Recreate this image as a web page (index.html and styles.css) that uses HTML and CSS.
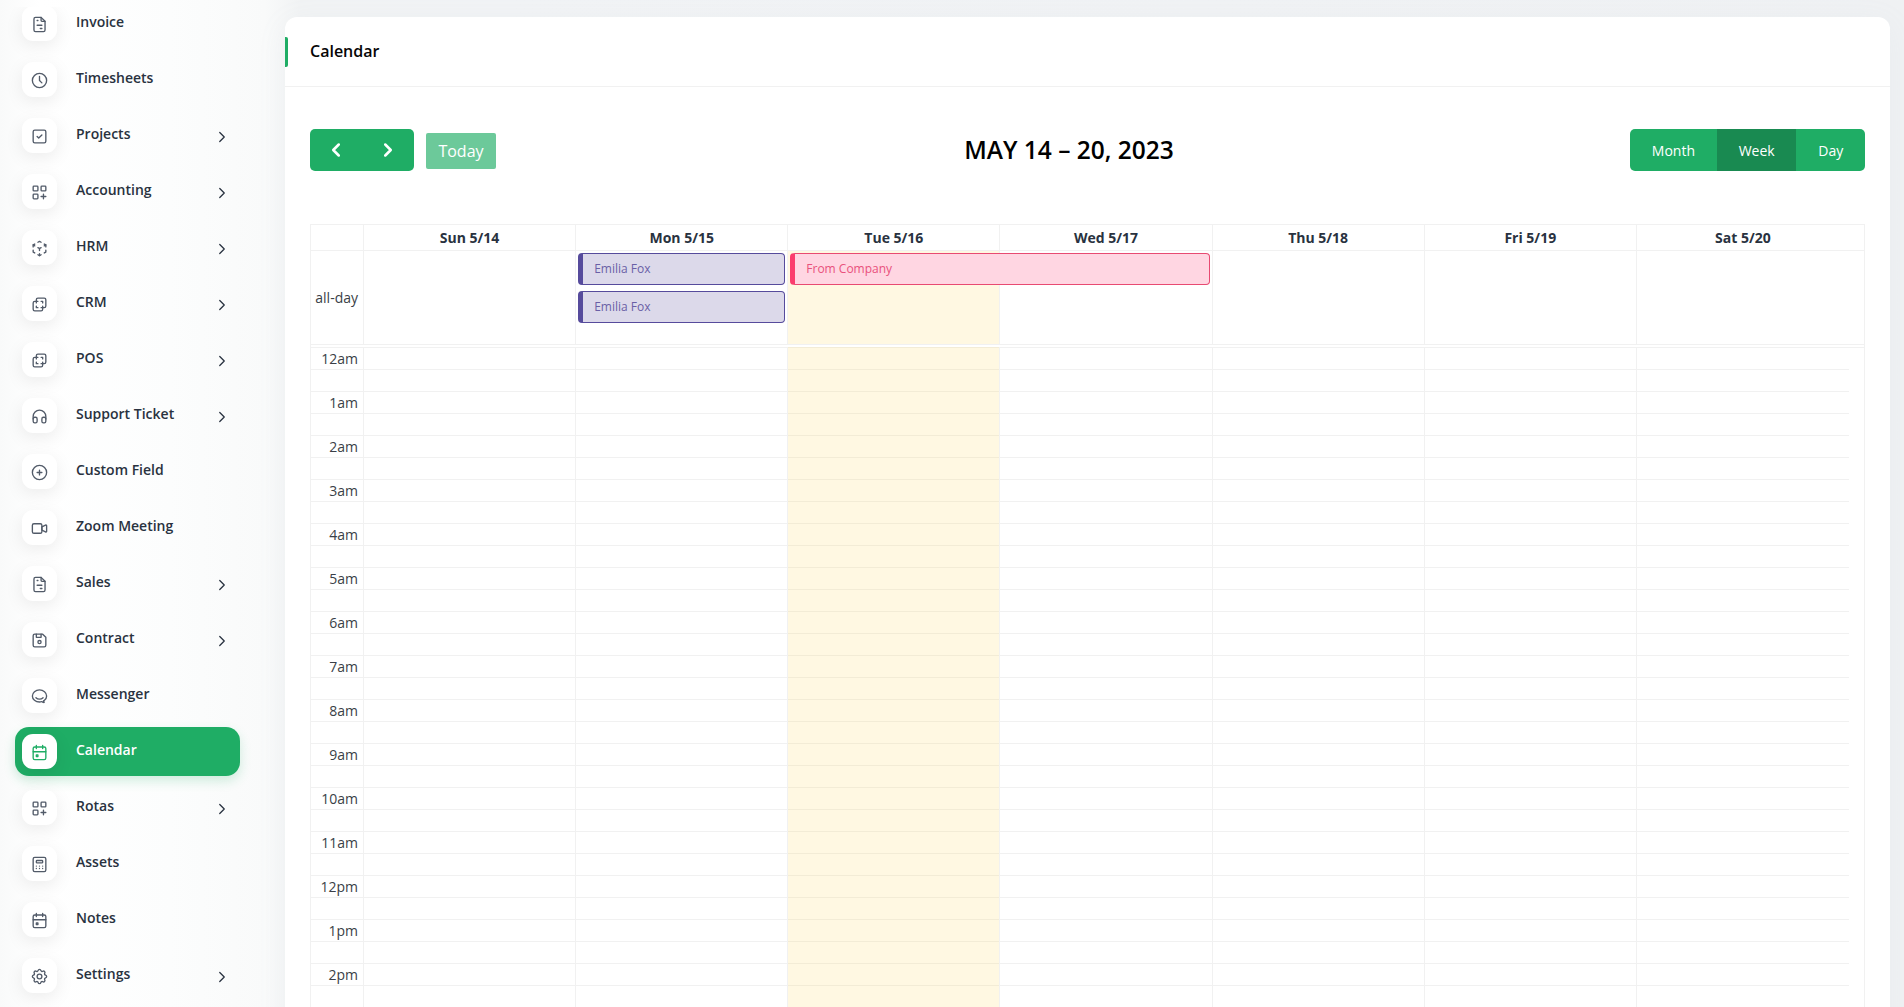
FILE: index.html
```html
<!DOCTYPE html>
<html lang="en">
<head>
<meta charset="utf-8">
<title>Calendar</title>
<link rel="stylesheet" href="styles.css">
</head>
<body>
<svg class="sprite" xmlns="http://www.w3.org/2000/svg">
  <symbol id="i-file" viewBox="0 0 24 24"><path d="M14 3v4a1 1 0 0 0 1 1h4"/><path d="M17 21H7a2 2 0 0 1-2-2V5a2 2 0 0 1 2-2h7l5 5v11a2 2 0 0 1-2 2z"/><path d="M9 7h1"/><path d="M9 13h6"/><path d="M13 17h2"/></symbol>
  <symbol id="i-clock" viewBox="0 0 24 24"><circle cx="12" cy="12" r="9"/><path d="M12 7v5l3 3"/></symbol>
  <symbol id="i-check" viewBox="0 0 24 24"><rect x="4" y="4" width="16" height="16" rx="2"/><path d="M9 12l2 2 4-4"/></symbol>
  <symbol id="i-grid" viewBox="0 0 24 24"><rect x="4" y="4" width="6" height="6" rx="1"/><rect x="14" y="4" width="6" height="6" rx="1"/><rect x="4" y="14" width="6" height="6" rx="1"/><path d="M14 17h6M17 14v6"/></symbol>
  <symbol id="i-cube" viewBox="0 0 24 24"><path d="M6 17.6l-2-1.1V14"/><path d="M4 10V7.5l2-1.1"/><path d="M10 4.1L12 3l2 1.1"/><path d="M18 6.4l2 1.1V10"/><path d="M20 14v2.5l-2 1.12"/><path d="M14 19.9L12 21l-2-1.1"/><path d="M12 12l2-1.12"/><path d="M18 8.6l2-1.1"/><path d="M12 12v2.5"/><path d="M12 18.5V21"/><path d="M12 12l-2-1.12"/><path d="M6 8.6L4 7.5"/></symbol>
  <symbol id="i-layers" viewBox="0 0 24 24"><path d="M16 16v2a2 2 0 0 1-2 2H6a2 2 0 0 1-2-2v-8a2 2 0 0 1 2-2h2"/><path d="M8 8V6a2 2 0 0 1 2-2h8a2 2 0 0 1 2 2v8a2 2 0 0 1-2 2h-2"/><path d="M10 8H8v2"/><path d="M8 14v2h2"/><path d="M14 8h2v2"/><path d="M16 14v2h-2"/></symbol>
  <symbol id="i-headphones" viewBox="0 0 24 24"><rect x="4" y="13" width="5" height="7" rx="2"/><rect x="15" y="13" width="5" height="7" rx="2"/><path d="M4 15v-3a8 8 0 0 1 16 0v3"/></symbol>
  <symbol id="i-plus" viewBox="0 0 24 24"><circle cx="12" cy="12" r="9"/><path d="M9 12h6M12 9v6"/></symbol>
  <symbol id="i-video" viewBox="0 0 24 24"><path d="M15 10l4.553-2.276A1 1 0 0 1 21 8.618v6.764a1 1 0 0 1-1.447.894L15 14v-4z"/><rect x="3" y="6" width="12" height="12" rx="2"/></symbol>
  <symbol id="i-floppy" viewBox="0 0 24 24"><path d="M6 4h10l4 4v10a2 2 0 0 1-2 2H6a2 2 0 0 1-2-2V6a2 2 0 0 1 2-2"/><circle cx="12" cy="14" r="2"/><path d="M14 4v4H8V4"/></symbol>
  <symbol id="i-chat" viewBox="0 0 24 24"><path d="M17.802 17.292s.077-.055.2-.149c1.843-1.425 2.998-3.49 2.998-5.789 0-4.286-4.03-7.764-8.998-7.764-4.97 0-9.002 3.478-9.002 7.764 0 4.288 4.03 7.646 9 7.646.753 0 2.092-.241 2.697-.404.306-.083.792.342 1.283.561.547.245 1.158.463 1.55.463.426 0 .5-.369.271-.56-.229-.191-.954-.97-.721-1.768z"/><path d="M7.5 13.5c2.5 2.5 6.5 2.5 9 0"/></symbol>
  <symbol id="i-calendar" viewBox="0 0 24 24"><rect x="4" y="5" width="16" height="16" rx="2"/><path d="M16 3v4M8 3v4M4 11h16"/><rect x="8" y="15" width="2" height="2"/></symbol>
  <symbol id="i-calc" viewBox="0 0 24 24"><rect x="4" y="3" width="16" height="18" rx="2"/><rect x="8" y="7" width="8" height="3" rx="1"/><path d="M8 14v.01M12 14v.01M16 14v.01M8 17v.01M12 17v.01M16 17v.01"/></symbol>
  <symbol id="i-gear" viewBox="0 0 24 24"><path d="M10.325 4.317c.426-1.756 2.924-1.756 3.35 0a1.724 1.724 0 0 0 2.573 1.066c1.543-.94 3.31.826 2.37 2.37a1.724 1.724 0 0 0 1.065 2.572c1.756.426 1.756 2.924 0 3.35a1.724 1.724 0 0 0-1.066 2.573c.94 1.543-.826 3.31-2.37 2.37a1.724 1.724 0 0 0-2.572 1.065c-.426 1.756-2.924 1.756-3.35 0a1.724 1.724 0 0 0-2.573-1.066c-1.543.94-3.31-.826-2.37-2.37a1.724 1.724 0 0 0-1.065-2.572c-1.756-.426-1.756-2.924 0-3.35a1.724 1.724 0 0 0 1.066-2.573c-.94-1.543.826-3.31 2.37-2.37 1 .608 2.296.07 2.572-1.065z"/><circle cx="12" cy="12" r="3"/></symbol>
  <symbol id="i-right" viewBox="0 0 24 24"><path d="M9 6l6 6-6 6"/></symbol>
  <symbol id="i-left" viewBox="0 0 24 24"><path d="M15 6l-6 6 6 6"/></symbol>
</svg>

<div class="page">
  <aside class="sidebar">
    <nav class="nav">
      <a class="nav-item"><span class="tile"><svg class="ico"><use href="#i-file"/></svg></span><span class="label">Invoice</span></a>
      <a class="nav-item"><span class="tile"><svg class="ico"><use href="#i-clock"/></svg></span><span class="label">Timesheets</span></a>
      <a class="nav-item"><span class="tile"><svg class="ico"><use href="#i-check"/></svg></span><span class="label">Projects</span><svg class="arrow"><use href="#i-right"/></svg></a>
      <a class="nav-item"><span class="tile"><svg class="ico"><use href="#i-grid"/></svg></span><span class="label">Accounting</span><svg class="arrow"><use href="#i-right"/></svg></a>
      <a class="nav-item"><span class="tile"><svg class="ico"><use href="#i-cube"/></svg></span><span class="label">HRM</span><svg class="arrow"><use href="#i-right"/></svg></a>
      <a class="nav-item"><span class="tile"><svg class="ico"><use href="#i-layers"/></svg></span><span class="label">CRM</span><svg class="arrow"><use href="#i-right"/></svg></a>
      <a class="nav-item"><span class="tile"><svg class="ico"><use href="#i-layers"/></svg></span><span class="label">POS</span><svg class="arrow"><use href="#i-right"/></svg></a>
      <a class="nav-item"><span class="tile"><svg class="ico"><use href="#i-headphones"/></svg></span><span class="label">Support Ticket</span><svg class="arrow"><use href="#i-right"/></svg></a>
      <a class="nav-item"><span class="tile"><svg class="ico"><use href="#i-plus"/></svg></span><span class="label">Custom Field</span></a>
      <a class="nav-item"><span class="tile"><svg class="ico"><use href="#i-video"/></svg></span><span class="label">Zoom Meeting</span></a>
      <a class="nav-item"><span class="tile"><svg class="ico"><use href="#i-file"/></svg></span><span class="label">Sales</span><svg class="arrow"><use href="#i-right"/></svg></a>
      <a class="nav-item"><span class="tile"><svg class="ico"><use href="#i-floppy"/></svg></span><span class="label">Contract</span><svg class="arrow"><use href="#i-right"/></svg></a>
      <a class="nav-item"><span class="tile"><svg class="ico"><use href="#i-chat"/></svg></span><span class="label">Messenger</span></a>
      <a class="nav-item active"><span class="tile"><svg class="ico"><use href="#i-calendar"/></svg></span><span class="label">Calendar</span></a>
      <a class="nav-item"><span class="tile"><svg class="ico"><use href="#i-grid"/></svg></span><span class="label">Rotas</span><svg class="arrow"><use href="#i-right"/></svg></a>
      <a class="nav-item"><span class="tile"><svg class="ico"><use href="#i-calc"/></svg></span><span class="label">Assets</span></a>
      <a class="nav-item"><span class="tile"><svg class="ico"><use href="#i-calendar"/></svg></span><span class="label">Notes</span></a>
      <a class="nav-item"><span class="tile"><svg class="ico"><use href="#i-gear"/></svg></span><span class="label">Settings</span><svg class="arrow"><use href="#i-right"/></svg></a>
    </nav>
  </aside>

  <main class="main">
    <section class="card">
      <header class="card-header"><h5 class="card-title">Calendar</h5></header>
      <div class="card-body">
        <div class="toolbar">
          <div class="tool-left">
            <div class="btn-group">
              <button class="btn btn-arrow"><svg class="chev"><use href="#i-left"/></svg></button>
              <button class="btn btn-arrow"><svg class="chev"><use href="#i-right"/></svg></button>
            </div>
            <button class="btn btn-today">Today</button>
          </div>
          <h2 class="range">MAY 14 – 20, 2023</h2>
          <div class="btn-group">
            <button class="btn btn-view">Month</button>
            <button class="btn btn-view is-on">Week</button>
            <button class="btn btn-view">Day</button>
          </div>
        </div>

        <div class="cal">
          <div class="row head">
            <div class="cell"></div>
            <div class="cell">Sun 5/14</div>
            <div class="cell">Mon 5/15</div>
            <div class="cell">Tue 5/16</div>
            <div class="cell">Wed 5/17</div>
            <div class="cell">Thu 5/18</div>
            <div class="cell">Fri 5/19</div>
            <div class="cell last">Sat 5/20</div>
          </div>
          <div class="allday">
            <div class="row allday-grid">
              <div class="cell axis c1">all-day</div>
              <div class="cell c2"></div>
              <div class="cell c3"></div>
              <div class="cell c4 today"></div>
              <div class="cell c5"></div>
              <div class="cell c6"></div>
              <div class="cell c7"></div>
              <div class="cell c8 last"></div>
              <div class="event purple e1">Emilia Fox</div>
              <div class="event purple e2">Emilia Fox</div>
              <div class="event pink e3">From Company</div>
            </div>
          </div>
          <div class="divider"></div>
          <div class="timegrid">
            <div class="row time-cols">
              <div class="cell times">
                <div class="hour">12am</div><div class="hour">1am</div><div class="hour">2am</div><div class="hour">3am</div>
                <div class="hour">4am</div><div class="hour">5am</div><div class="hour">6am</div><div class="hour">7am</div>
                <div class="hour">8am</div><div class="hour">9am</div><div class="hour">10am</div><div class="hour">11am</div>
                <div class="hour">12pm</div><div class="hour">1pm</div><div class="hour">2pm</div>
              </div>
              <div class="cell"></div>
              <div class="cell"></div>
              <div class="cell today"></div>
              <div class="cell"></div>
              <div class="cell"></div>
              <div class="cell"></div>
              <div class="cell last"></div>
            </div>
          </div>
        </div>
      </div>
    </section>
  </main>
</div>
</body>
</html>
```
FILE: styles.css
```css
* { box-sizing: border-box; }
html, body { margin: 0; height: 100%; overflow: hidden; }
body {
  font-family: "Open Sans", "Liberation Sans", sans-serif;
  font-size: 14px;
  color: #293240;
  background: #f1f3f5;
}
.sprite { display: none; }
.page {
  display: flex;
  height: 1007px;
  overflow: hidden;
  background: linear-gradient(90deg, #f9fafa 0, #fff 40px, #fcfdfd 170px, #f9fafa 265px, #f1f3f4 300px, #f1f3f5 500px, #eff1f3 100%);
}

/* Sidebar */
.sidebar { width: 285px; flex: none; padding-top: 7px; overflow: hidden; }
.nav { height: 1000px; overflow: hidden; padding: 0 45px 0 15px; }
.nav-item {
  display: flex;
  align-items: center;
  height: 49px;
  margin-bottom: 7px;
  padding: 0 9px 0 7px;
  border-radius: 14px;
  font-weight: 600;
  color: #293240;
}
.nav-item:first-child { margin-top: -8px; }
.tile {
  flex: none;
  display: flex;
  align-items: center;
  justify-content: center;
  width: 35px;
  height: 35px;
  margin-right: 19px;
  border-radius: 11px;
  background: #fff;
  box-shadow: 0 5px 18px rgba(0, 0, 0, .08);
}
.ico {
  width: 19px;
  height: 19px;
  margin-top: 2px;
  fill: none;
  stroke: #525b69;
  stroke-width: 1.7;
  stroke-linecap: round;
  stroke-linejoin: round;
}
.label { margin-bottom: 5px; line-height: 19px; }
.arrow {
  width: 18px;
  height: 18px;
  margin: 3px 0 0 auto;
  fill: none;
  stroke: #293240;
  stroke-width: 1.7;
  stroke-linecap: round;
  stroke-linejoin: round;
}
.nav-item.active {
  background: #1fad65;
  color: #fff;
  box-shadow: 0 5px 12px rgba(31, 173, 101, .2);
}
.nav-item.active .ico { stroke: #1fad65; }

/* Main */
.main { flex: 1; min-width: 0; padding: 17px 14px 0 0; }
.card {
  height: 1100px;
  background: #fff;
  border-radius: 12px 12px 0 0;
  box-shadow: 0 6px 30px rgba(182, 186, 203, .08);
}
.card-header {
  position: relative;
  display: flex;
  align-items: center;
  height: 70px;
  padding: 0 25px 2px;
  border-bottom: 1px solid #f1f1f1;
}
.card-header::before {
  content: "";
  position: absolute;
  left: 0;
  top: 20px;
  width: 3px;
  height: 30px;
  background: #1fad65;
  border-radius: 0 2px 2px 0;
}
.card-title { margin: 0; font-size: 16px; font-weight: 600; color: #060606; }
.card-body { padding: 42px 25px 0; }

/* Toolbar */
.toolbar {
  display: flex;
  align-items: center;
  justify-content: space-between;
  height: 42px;
  margin-bottom: 53px;
}
.tool-left { display: flex; align-items: center; margin-right: 12px; }
.btn-group { display: flex; border-radius: 5px; overflow: hidden; }
.btn {
  border: 0;
  padding: 0;
  font-family: inherit;
  color: #fff;
  background: #1fad65;
}
.btn-arrow { display: flex; align-items: center; justify-content: center; width: 52px; height: 42px; }
.chev {
  width: 22px;
  height: 22px;
  fill: none;
  stroke: #fff;
  stroke-width: 2.8;
  stroke-linecap: round;
  stroke-linejoin: round;
}
.btn-today {
  width: 70px;
  height: 36px;
  margin: 2px 0 0 12px;
  border-radius: 2px;
  font-size: 16px;
  opacity: .65;
}
.range { margin: 0; font-size: 24.5px; font-weight: 600; color: #000; line-height: 32px; }
.btn-view { height: 42px; padding: 0 21.8px; font-size: 14px; }
.btn-view.is-on { background: #198a51; }

/* Calendar */
.cal {
  border: solid #f1f1f1;
  border-width: 1px 1px 0;
}
.row {
  display: grid;
  grid-template-columns: 53px repeat(7, 1fr);
  margin-right: 15px;
}
.cell { border-right: 1px solid #f1f1f1; }
.cell.last { border-right: 0; }
.today { background: rgba(255, 205, 60, .15); }
.head { height: 25px; }
.head .cell {
  text-align: center;
  font-weight: 700;
  line-height: 26px;
}
.allday {
  border-top: 1px solid #f1f1f1;
  border-bottom: 1px solid #f1f1f1;
}
.allday-grid { height: 93px; grid-template-rows: 34px 38px 21px; }
.c1, .c2, .c3, .c4, .c5, .c6, .c7, .c8 { grid-row: 1 / -1; }
.c1 { grid-column: 1; } .c2 { grid-column: 2; } .c3 { grid-column: 3; } .c4 { grid-column: 4; }
.c5 { grid-column: 5; } .c6 { grid-column: 6; } .c7 { grid-column: 7; } .c8 { grid-column: 8; }
.axis {
  display: flex;
  align-items: center;
  justify-content: flex-end;
  padding-right: 5px;
  color: #3a3f47;
}
.event {
  display: flex;
  align-items: center;
  height: 32px;
  margin: 2px 3px 0 2px;
  padding: 0 0 2px 11px;
  border: 1px solid;
  border-left-width: 5px;
  border-radius: 4px;
  font-size: 12px;
}
.purple { background: #dcd9ea; border-color: #564b9c; color: #6a5fa6; }
.pink { background: #ffd6e2; border-color: #e84a72; border-left-color: #fb3d6d; color: #e9517c; }
.e1 { grid-column: 3; grid-row: 1; }
.e2 { grid-column: 3; grid-row: 2; margin-top: 6px; }
.e3 { grid-column: 4 / span 2; grid-row: 1; }
.divider { height: 2px; }
.timegrid { border-top: 1px solid #f1f1f1; height: 700px; }
.time-cols {
  height: 700px;
  margin-top: -1px;
  background: repeating-linear-gradient(180deg, #f1f1f1 0, #f1f1f1 1px, transparent 1px, transparent 22px);
}
.hour {
  height: 44px;
  padding: 1px 5px 0 0;
  text-align: right;
  line-height: 21px;
  color: #3a3f47;
}
```
